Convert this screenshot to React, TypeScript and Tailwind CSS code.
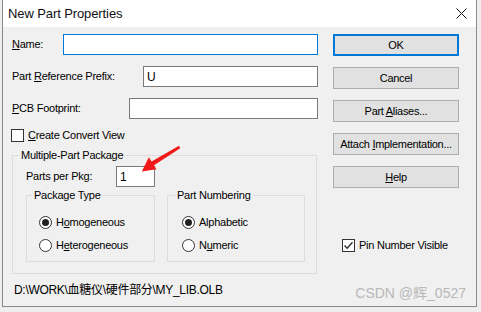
import type { ReactNode } from "react";

const font = { fontFamily: '"Liberation Sans", "Noto Sans CJK SC", sans-serif' };

function Btn({ children, primary }: { children: ReactNode; primary?: boolean }) {
  return (
    <button
      className={`h-[22px] w-[126px] bg-[#e1e1e1] text-[11px] text-black tracking-[-0.3px] flex items-center justify-center ${
        primary ? "border-2 border-[#0078d7]" : "border border-[#adadad]"
      }`}
    >
      <span>{children}</span>
    </button>
  );
}

function Check({ checked }: { checked?: boolean }) {
  return (
    <span className="w-[13px] h-[13px] border border-[#333] bg-white flex items-center justify-center shrink-0">
      {checked && (
        <svg width="11" height="11" viewBox="0 0 11 11">
          <path d="M1.5 5.5 L4.2 8.3 L9.5 2.2" fill="none" stroke="#333" strokeWidth="1.4" />
        </svg>
      )}
    </span>
  );
}

function Radio({ checked, children }: { checked?: boolean; children: ReactNode }) {
  return (
    <div className="flex items-center gap-[4px] h-[14px]">
      <span className="w-[13px] h-[13px] rounded-full border border-[#333] bg-white flex items-center justify-center">
        {checked && <span className="w-[7px] h-[7px] rounded-full bg-[#222]" />}
      </span>
      <span>{children}</span>
    </div>
  );
}

export default function App() {
  return (
    <div className="w-[481px] h-[312px] bg-[#eeeeee] overflow-hidden" style={font}>
      <div className="ml-[2px] w-[475px] h-[307px] border-l border-r border-b border-[#8a8a8a] flex flex-col">
        {/* title bar */}
        <div className="h-[27px] bg-white flex items-center justify-between pl-[5px] pr-[9px]">
          <span className="text-[13px] text-[#111] tracking-[-0.1px]">New Part Properties</span>
          <svg width="11" height="11" viewBox="0 0 11 11">
            <path d="M0.5 0.5 L10.5 10.5 M10.5 0.5 L0.5 10.5" stroke="#111" strokeWidth="1" />
          </svg>
        </div>

        {/* body */}
        <div className="relative flex-1 bg-[#f0f0f0] flex text-[11px] text-black tracking-[-0.25px]">
          <div className="w-[306px] ml-[9px] pt-[7px] flex flex-col">
            <div className="flex items-center justify-between h-[21px]">
              <span>
                <u>N</u>ame:
              </span>
              <div className="w-[255px] h-[21px] bg-white border border-[#0078d7]" />
            </div>
            <div className="flex items-center justify-between h-[21px] mt-[11px]">
              <span>
                Part <u>R</u>eference Prefix:
              </span>
              <div className="w-[175px] h-[21px] bg-white border border-[#7a7a7a] flex items-center pl-[3px] text-[12px]">
                U
              </div>
            </div>
            <div className="flex items-center justify-between h-[21px] mt-[11px]">
              <span>
                <u>P</u>CB Footprint:
              </span>
              <div className="w-[189px] h-[21px] bg-white border border-[#7a7a7a]" />
            </div>
            <div className="flex items-center gap-[4px] mt-[9px] h-[14px] -ml-[1px]">
              <Check />
              <span>
                <u>C</u>reate Convert View
              </span>
            </div>

            <fieldset className="w-[305px] mt-[7px] border border-[#dcdcdc] pl-[13px] pr-[10px] pb-[11px]">
              <legend className="-ml-[7px] px-[2px] leading-[13px]">Multiple-Part Package</legend>
              <div className="flex items-center mt-[4px] h-[21px]">
                <span className="w-[90px]">Parts per Pkg:</span>
                <div className="w-[39px] h-[21px] bg-white border border-[#7a7a7a] flex items-center pl-[3px] text-[12px]">
                  1
                </div>
              </div>
              <div className="flex gap-[12px] mt-[2px]">
                <fieldset className="w-[129px] h-[73px] border border-[#dcdcdc] pl-[12px]">
                  <legend className="-ml-[7px] px-[2px] leading-[13px]">Package Type</legend>
                  <div className="flex flex-col gap-[9px] mt-[13px]">
                    <Radio checked>
                      H<u>o</u>mogeneous
                    </Radio>
                    <Radio>
                      H<u>e</u>terogeneous
                    </Radio>
                  </div>
                </fieldset>
                <fieldset className="w-[138px] h-[73px] border border-[#dcdcdc] pl-[14px]">
                  <legend className="-ml-[7px] px-[2px] leading-[13px]">Part Numbering</legend>
                  <div className="flex flex-col gap-[9px] mt-[13px]">
                    <Radio checked>Alphabetic</Radio>
                    <Radio>
                      N<u>u</u>meric
                    </Radio>
                  </div>
                </fieldset>
              </div>
            </fieldset>

            <div className="mt-[7px] ml-[2px] text-[12px] tracking-[-0.3px]">D:\WORK\血糖仪\硬件部分\MY_LIB.OLB</div>
          </div>

          <div className="ml-[15px] pt-[7px] flex flex-col gap-[11px]">
            <Btn primary>OK</Btn>
            <Btn>Cancel</Btn>
            <Btn>
              Part <u>A</u>liases...
            </Btn>
            <Btn>
              Attach <u>I</u>mplementation...
            </Btn>
            <Btn>
              <u>H</u>elp
            </Btn>
            <div className="flex items-center gap-[4px] mt-[39px] ml-[9px] h-[14px]">
              <Check checked />
              <span>Pin Number Visible</span>
            </div>
          </div>

          {/* annotation arrow */}
          <svg className="absolute left-[134px] top-[116px]" width="46" height="34" viewBox="134 143 46 34">
            <polygon
              points="176,145.8 177.2,148.2 151,165.2 153.4,169.2 138.8,171.4 145.8,157.2 148.6,161.6"
              fill="#f01818"
            />
          </svg>

          {/* watermark */}
          <span className="absolute right-[10px] bottom-[2px] text-[14px] text-[#b8b8b8] tracking-[0px]">
            CSDN @辉_0527
          </span>
        </div>
      </div>
    </div>
  );
}
